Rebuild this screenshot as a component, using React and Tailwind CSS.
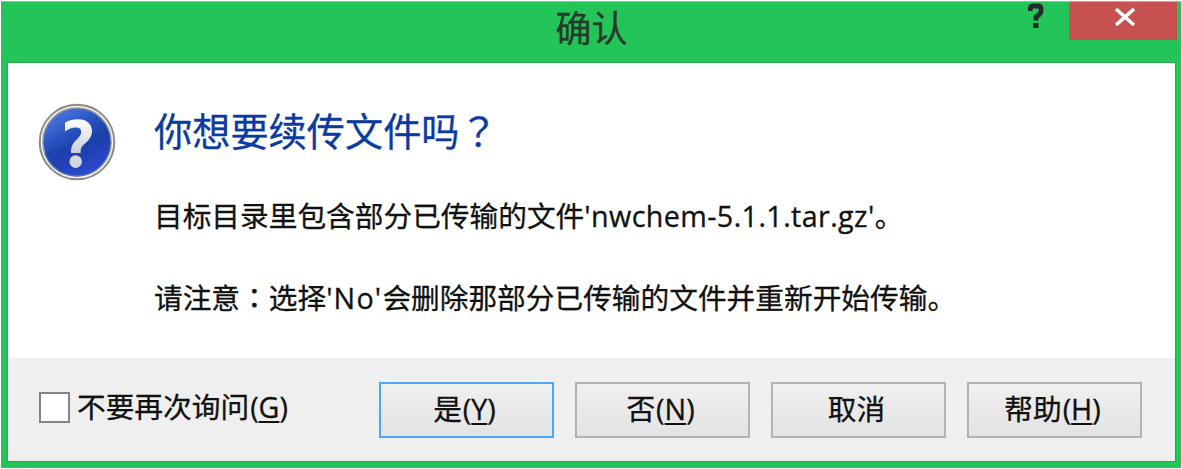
import React from "react";

const CJK = "font-['Noto_Sans_CJK_SC',sans-serif]";

function Latin({ children, className = "" }) {
  return <span className={`font-['Open_Sans','Noto_Sans',sans-serif] ${className}`}>{children}</span>;
}

function Wide({ children }) {
  return <span className="font-['Noto_Sans_CJK_TC',sans-serif]">{children}</span>;
}

function HelpBadge() {
  return (
    <svg className="h-[78px] w-[78px] shrink-0" viewBox="0 0 78 78" aria-hidden="true">
      <defs>
        <linearGradient id="ball" x1="0.15" y1="0.05" x2="0.7" y2="1">
          <stop offset="0" stopColor="#4d78e8" />
          <stop offset="0.35" stopColor="#2853bf" />
          <stop offset="0.62" stopColor="#1a3fa4" />
          <stop offset="1" stopColor="#2d49d0" />
        </linearGradient>
        <linearGradient id="shade" x1="0.2" y1="0" x2="0.7" y2="1">
          <stop offset="0" stopColor="#12389a" stopOpacity="0.55" />
          <stop offset="1" stopColor="#3049d8" stopOpacity="0.5" />
        </linearGradient>
        <linearGradient id="mark" x1="0" y1="0" x2="0" y2="1">
          <stop offset="0" stopColor="#ffffff" />
          <stop offset="1" stopColor="#cbcbd8" />
        </linearGradient>
      </defs>
      <circle cx="39" cy="39" r="37.3" fill="#f3f3f1" stroke="#8b8b89" strokeWidth="2" />
      <circle cx="39" cy="39" r="34" fill="url(#ball)" stroke="#8f9399" strokeWidth="1.6" />
      <path d="M6 50C25 47 43 31 71 29A33 33 0 0 1 6 50Z" fill="url(#shade)" />
      <path
        d="M27 19.5C31 17.2 35.5 16.3 40 16.3C48.5 16.3 54 21 54 28C54 33.8 50.5 37.5 46.5 41C43.2 43.8 42.6 46 42.6 50H33C32.8 44.5 34.2 40.8 37.8 37.4C41 34.4 43.2 32.2 43.2 29C43.2 26 41 24.6 37.6 24.6C34 24.6 30.5 26 27 28.6Z"
        fill="url(#mark)"
      />
      <circle cx="37.7" cy="58.6" r="6.3" fill="#d5d5e2" />
    </svg>
  );
}

function DialogButton({ label, accessKey, primary }) {
  return (
    <button
      className={`flex h-[56px] w-[175px] items-center justify-center border-2 bg-linear-to-b from-[#f0f0f0] to-[#e3e3e3] pr-[4px] pb-[3px] ${
        primary ? "border-[#4fa5fb]" : "border-[#b3b3b3]"
      }`}
    >
      <span className="whitespace-nowrap">
        {label}
        {accessKey && <AccessKey letter={accessKey} />}
      </span>
    </button>
  );
}

function AccessKey({ letter }) {
  return (
    <Latin className="ml-[1px] text-[28.7px]">
      (<span className="underline decoration-2 underline-offset-[3px]">{letter}</span>)
    </Latin>
  );
}

export default function App() {
  return (
    <div className={`h-[469px] w-[1182px] overflow-hidden bg-white pt-px pl-px text-[28.7px] leading-none text-[#111] [-webkit-text-stroke:0.3px] ${CJK}`}>
      <div className="flex h-[467px] w-[1180px] flex-col border-t border-[#6fd893] bg-[#24c558] pr-[5px] pb-[6px] pl-[6px]">
        <header className="grid h-[60px] shrink-0 grid-cols-[1fr_auto_1fr]">
          <div />
          <h1 className="pt-[6px] text-[36px] leading-[36px] font-normal text-[#263a2c]">确认</h1>
          <div className="flex items-start justify-end">
            <svg className="mt-[1px] mr-[25px] h-[25px] w-[16px]" viewBox="0 0 16 25" aria-label="?">
              <path d="M2.3 8V5.8Q2.3 3 5.5 3H9.8Q13 3 13 5.8V8.3Q13 10.2 11 11.8L8 14V17.5" fill="none" stroke="#25282a" strokeWidth="4.8" />
              <rect x="5.2" y="20" width="5.2" height="5" fill="#25282a" />
            </svg>
            <button className="mr-[-1px] flex h-[38px] w-[108px] items-center justify-center bg-[#c75050] pb-[8px] pl-[3px]" aria-label="Close">
              <svg className="h-[18px] w-[22px]" viewBox="0 0 22 18" aria-hidden="true">
                <path d="M2 1L20 17M20 1L2 17" fill="none" stroke="#fff" strokeWidth="3.6" />
              </svg>
            </button>
          </div>
        </header>

        <main className="flex min-h-0 flex-1 flex-col border border-[#20ab4d] bg-white">
          <section className="flex flex-1 gap-[38px] pt-[40px] pl-[30px]">
            <HelpBadge />
            <div className="flex flex-col whitespace-nowrap">
              <h2 className="h-[54px] pt-[4px] text-[38.2px] leading-[46px] font-normal text-[#0b3aa0]">
                你想要续传文件吗<Wide>？</Wide>
              </h2>
              <p className="mt-[38px] h-[40px] leading-[40px]">
                目标目录里包含部分已传输的文件<Latin className="tracking-[0.4px]">'nwchem-5.1.1.tar.gz'</Latin>。
              </p>
              <p className="mt-[42px] h-[40px] leading-[40px]">
                请注意<Wide>：</Wide>选择<Latin className="tracking-[1.2px]">'No'</Latin>会删除那部分已传输的文件并重新开始传输。
              </p>
            </div>
          </section>

          <footer className="flex h-[103px] shrink-0 items-start bg-[#efefef] pt-[24px] pl-[31px]">
            <label className="flex h-[50px] w-[340px] items-center gap-[7px] whitespace-nowrap">
              <span className="h-[31px] w-[31px] border-2 border-[#858585] bg-white" />
              <span className="pb-px">
                不要再次询问
                <AccessKey letter="G" />
              </span>
            </label>
            <div className="flex gap-[21px]">
              <DialogButton label="是" accessKey="Y" primary />
              <DialogButton label="否" accessKey="N" />
              <DialogButton label="取消" />
              <DialogButton label="帮助" accessKey="H" />
            </div>
          </footer>
        </main>
      </div>
    </div>
  );
}
